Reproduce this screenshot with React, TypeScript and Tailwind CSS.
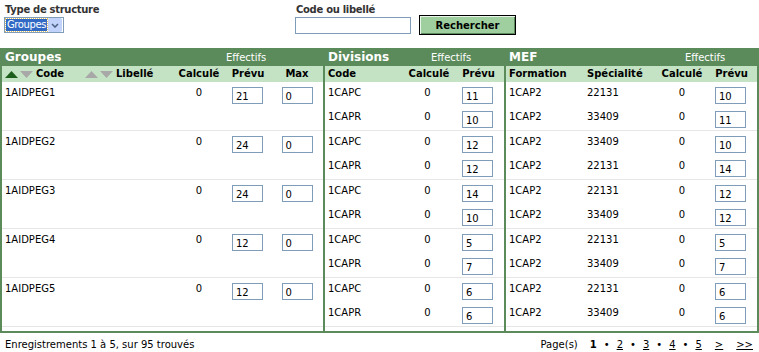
import { FC } from 'react';

type Group = {
   code: string;
   prevu: number;
   max: number;
   divs: [string, number][];
   mefs: [string, string, number][];
};

const groups: Group[] = [
   { code: '1AIDPEG1', prevu: 21, max: 0, divs: [['1CAPC', 11], ['1CAPR', 10]], mefs: [['1CAP2', '22131', 10], ['1CAP2', '33409', 11]] },
   { code: '1AIDPEG2', prevu: 24, max: 0, divs: [['1CAPC', 12], ['1CAPR', 12]], mefs: [['1CAP2', '33409', 10], ['1CAP2', '22131', 14]] },
   { code: '1AIDPEG3', prevu: 24, max: 0, divs: [['1CAPC', 14], ['1CAPR', 10]], mefs: [['1CAP2', '22131', 12], ['1CAP2', '33409', 12]] },
   { code: '1AIDPEG4', prevu: 12, max: 0, divs: [['1CAPC', 5], ['1CAPR', 7]], mefs: [['1CAP2', '22131', 5], ['1CAP2', '33409', 7]] },
   { code: '1AIDPEG5', prevu: 12, max: 0, divs: [['1CAPC', 6], ['1CAPR', 6]], mefs: [['1CAP2', '22131', 6], ['1CAP2', '33409', 6]] },
];

const Box: FC<{ value: number }> = ({ value }) => (
   <div className="mt-px h-[17px] w-[31px] border border-[#7f9db9] bg-white pl-[3px] pt-[2px] text-[10px] leading-[13px]">
      {value}
   </div>
);

const Arrows: FC<{ active?: boolean }> = ({ active }) => (
   <span className="flex items-center gap-[2px]">
      <svg width="13" height="7" viewBox="0 0 13 7">
         <polygon points="0,7 6.5,0 13,7" fill={active ? '#1d5e1d' : '#a8a8a8'} />
      </svg>
      <svg width="13" height="7" viewBox="0 0 13 7">
         <polygon points="0,0 13,0 6.5,7" fill="#a8a8a8" />
      </svg>
   </span>
);

const PanelHead: FC<{ title: string; w: string }> = ({ title, w }) => (
   <div className="flex h-[17px] items-center text-white">
      <div className={`${w} pl-[3px] text-[12px] font-bold leading-[17px]`}>{title}</div>
      <div className="text-[10px] leading-[17px]">Effectifs</div>
   </div>
);

const App: FC = () => {
   return (
      <div className="h-[352px] w-[759px] bg-white font-['DejaVu_Sans',sans-serif] text-[10px] text-black">
         {/* search bar */}
         <div className="flex h-[48px] items-start">
            <div className="ml-[5px] mt-[4px] flex w-[290px] flex-col">
               <div className="text-[10px] font-bold leading-[12px] tracking-[-0.3px] text-[#333]">Type de structure</div>
               <div className="-ml-px mt-px flex h-[16px] w-fit items-center border border-[#7f9db9] bg-white pr-px">
                  <span className="ml-px h-[12px] bg-[#316ac5] px-px text-[10px] leading-[12px] tracking-[-0.4px] text-white outline-1 outline-dotted outline-[#e0c060]">
                     Groupes
                  </span>
                  <span className="ml-px flex h-[14px] w-[14px] items-center justify-center rounded-[2px] bg-[#c1d3fb]">
                     <svg width="8" height="5" viewBox="0 0 8 5">
                        <polyline points="1,1 4,4 7,1" fill="none" stroke="#4d6185" strokeWidth="1.6" />
                     </svg>
                  </span>
               </div>
            </div>
            <div className="mt-[4px] flex flex-col">
               <div className="pl-px text-[10px] font-bold leading-[12px] tracking-[-0.3px] text-[#333]">Code ou libellé</div>
               <div className="mt-px h-[17px] w-[116px] border border-[#7f9db9] bg-white" />
            </div>
            <button className="ml-[8px] mt-[15px] flex h-[20px] w-[97px] items-center justify-center border border-black bg-[#9fcf9f] text-[10px] font-bold shadow-[inset_1px_1px_0_#e8f5e8,inset_-1px_-1px_0_#5d8a5d]">
               Rechercher
            </button>
         </div>

         {/* panels */}
         <div className="flex gap-[2px] bg-[#5b8a5b] px-[2px] pb-[2px] pt-px">
            {/* Groupes */}
            <div className="w-[321px]">
               <PanelHead title="Groupes" w="w-[224px]" />
               <div className="grid h-[16px] grid-cols-[80px_95px_44px_54px_44px_4px] items-center bg-[#c4e3c4] font-bold leading-[16px]">
                  <div className="flex items-center gap-[3px] pl-[3px]">
                     <Arrows active />
                     <span>Code</span>
                  </div>
                  <div className="flex items-center gap-[3px] pl-[3px]">
                     <Arrows />
                     <span>Libellé</span>
                  </div>
                  <div className="text-center">Calculé</div>
                  <div className="text-center">Prévu</div>
                  <div className="text-center">Max</div>
                  <div />
               </div>
               <div className="bg-white pb-[4px]">
                  {groups.map((g) => (
                     <div key={g.code} className="grid h-[49px] grid-cols-[80px_95px_44px_54px_44px_4px] items-start border-b border-[#e6e6e6] pt-[4px] leading-[13px]">
                        <div className="pl-[3px]">{g.code}</div>
                        <div />
                        <div className="text-center">0</div>
                        <div className="flex justify-center pr-px">
                           <Box value={g.prevu} />
                        </div>
                        <div className="flex justify-center">
                           <Box value={g.max} />
                        </div>
                        <div />
                     </div>
                  ))}
               </div>
            </div>

            {/* Divisions */}
            <div className="w-[179px]">
               <PanelHead title="Divisions" w="w-[106px]" />
               <div className="grid h-[16px] grid-cols-[80px_48px_51px] items-center bg-[#c4e3c4] font-bold leading-[16px]">
                  <div className="pl-[3px]">Code</div>
                  <div className="text-center">Calculé</div>
                  <div className="text-center">Prévu</div>
               </div>
               <div className="bg-white pb-[4px]">
                  {groups.map((g) => (
                     <div key={g.code} className="h-[49px] border-b border-[#e6e6e6]">
                        {g.divs.map(([code, n]) => (
                           <div key={code} className="grid h-[24px] grid-cols-[80px_48px_51px] items-start pt-[4px] leading-[13px]">
                              <div className="pl-[3px]">{code}</div>
                              <div className="pr-[3px] text-center">0</div>
                              <div className="flex justify-center pr-[2px]">
                                 <Box value={n} />
                              </div>
                           </div>
                        ))}
                     </div>
                  ))}
               </div>
            </div>

            {/* MEF */}
            <div className="w-[251px]">
               <PanelHead title="MEF" w="w-[179px]" />
               <div className="grid h-[16px] grid-cols-[78px_74px_48px_51px] items-center bg-[#c4e3c4] font-bold leading-[16px]">
                  <div className="pl-[3px]">Formation</div>
                  <div className="pl-[3px]">Spécialité</div>
                  <div className="text-center">Calculé</div>
                  <div className="text-center">Prévu</div>
               </div>
               <div className="bg-white pb-[4px]">
                  {groups.map((g) => (
                     <div key={g.code} className="h-[49px] border-b border-[#e6e6e6]">
                        {g.mefs.map(([f, s, n]) => (
                           <div key={s} className="grid h-[24px] grid-cols-[78px_74px_48px_51px] items-start pt-[4px] leading-[13px]">
                              <div className="pl-[3px]">{f}</div>
                              <div className="pl-[3px]">{s}</div>
                              <div className="text-center">0</div>
                              <div className="flex justify-center pr-[2px]">
                                 <Box value={n} />
                              </div>
                           </div>
                        ))}
                     </div>
                  ))}
               </div>
            </div>
         </div>

         {/* footer */}
         <div className="flex h-[18px] items-end justify-between pl-[5px] pr-[6px] leading-[13px]">
            <span>Enregistrements 1 à 5, sur 95 trouvés</span>
            <div className="flex items-center">
               <span className="mr-[12px]">Page(s)</span>
               <span className="font-bold">1</span>
               {['2', '3', '4', '5'].map((p) => (
                  <span key={p} className="flex items-center">
                     <span className="mx-[7px]">•</span>
                     <span className="underline">{p}</span>
                  </span>
               ))}
               <span className="ml-[13px] underline">&gt;</span>
               <span className="ml-[13px] underline">&gt;&gt;</span>
            </div>
         </div>
      </div>
   );
};

export default App;
